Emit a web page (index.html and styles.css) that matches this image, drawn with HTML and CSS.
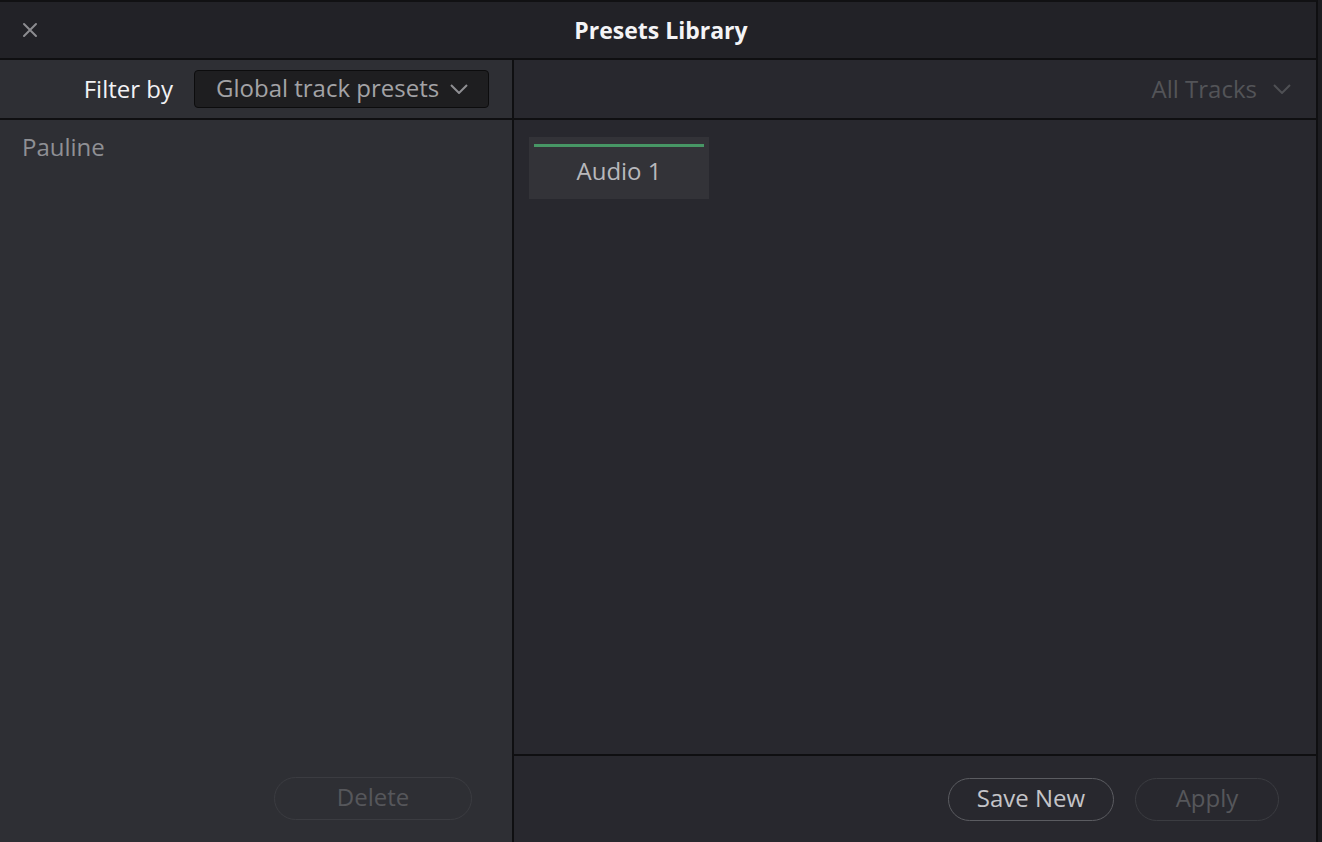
FILE: index.html
```html
<!DOCTYPE html>
<html lang="en">
<head>
    <meta charset="UTF-8">
    <meta name="viewport" content="width=device-width, initial-scale=1.0">
    <title>Presets Library</title>
    <link rel="stylesheet" href="styles.css">
</head>
<body>
    <div class="window">
        <div class="title-bar">
            <button class="close-btn" aria-label="Close">
                <svg width="16" height="16" viewBox="0 0 16 16">
                    <path d="M2 2 L14 14 M14 2 L2 14" stroke="#8c8c90" stroke-width="2" stroke-linecap="round"/>
                </svg>
            </button>
            <h1>Presets Library</h1>
        </div>

        <div class="panes">
            <!-- preset list -->
            <div class="pane pane-left">
                <div class="pane-header">
                    <span class="filter-label">Filter by</span>
                    <div class="dropdown">
                        <span>Global track presets</span>
                        <svg width="18" height="10" viewBox="0 0 18 10">
                            <path d="M1 1 L9 9 L17 1" fill="none" stroke="#8e8e92" stroke-width="2"/>
                        </svg>
                    </div>
                </div>
                <ul class="preset-list">
                    <li>Pauline</li>
                </ul>
                <div class="pane-footer">
                    <button class="pill pill-wide" disabled>Delete</button>
                </div>
            </div>

            <!-- tracks -->
            <div class="pane pane-right">
                <div class="pane-header">
                    <div class="track-filter">
                        <span>All Tracks</span>
                        <svg width="18" height="10" viewBox="0 0 18 10">
                            <path d="M1 1 L9 9 L17 1" fill="none" stroke="#4f5054" stroke-width="2"/>
                        </svg>
                    </div>
                </div>
                <div class="tracks">
                    <div class="track">
                        <div class="track-bar"></div>
                        <span>Audio 1</span>
                    </div>
                </div>
                <div class="pane-footer footer-bordered">
                    <button class="pill pill-active">Save New</button>
                    <button class="pill pill-apply" disabled>Apply</button>
                </div>
            </div>
        </div>
    </div>
    <div class="edge"></div>
</body>
</html>
```

FILE: styles.css
```css
body {
    margin: 0;
    height: 842px;
    overflow: hidden;
    display: flex;
    background-color: #111113;
    font-family: "Open Sans", "Noto Sans", sans-serif;
}

.window {
    width: 1316px;
    height: 840px;
    border-top: 2px solid #111113;
    border-right: 2px solid #0f0f11;
    display: flex;
    flex-direction: column;
}

.edge {
    flex: 1;
    background-color: #1c1c20;
}

.title-bar {
    height: 56px;
    background-color: #222227;
    border-bottom: 2px solid #0f0f11;
    display: flex;
    align-items: center;
    justify-content: center;
    position: relative;
}

.title-bar h1 {
    margin: 0 0 0 6px;
    font-size: 23px;
    font-weight: 700;
    color: #f4f4f6;
}

.close-btn {
    position: absolute;
    left: 22px;
    top: 20px;
    padding: 0;
    background: none;
    border: none;
    width: 16px;
    height: 16px;
    cursor: pointer;
}

.panes {
    flex: 1;
    display: grid;
    grid-template-columns: 512px 1fr;
    column-gap: 2px;
    background-color: #0f0f11;
}

.pane {
    display: flex;
    flex-direction: column;
}

.pane-left {
    background-color: #2e2f34;
}

.pane-right {
    background-color: #28282e;
}

.pane-header {
    height: 60px;
    border-bottom: 2px solid #0f0f11;
    display: flex;
    align-items: center;
    justify-content: flex-end;
    box-sizing: border-box;
    padding-right: 23px;
}

.pane-right .pane-header {
    padding-right: 25px;
}

.filter-label {
    color: #f2f2f4;
    font-size: 24px;
    margin-right: 21px;
    margin-top: -1px;
}

.dropdown {
    width: 295px;
    height: 38px;
    box-sizing: border-box;
    background-color: #1e1e20;
    border: 1px solid #0c0c0d;
    border-radius: 4px;
    display: flex;
    align-items: center;
    padding-left: 21px;
    color: #a3a3a6;
    font-size: 24px;
}

.dropdown span {
    margin-right: 11px;
    margin-top: -3px;
}

.track-filter {
    display: flex;
    align-items: center;
    color: #535458;
    font-size: 24px;
}

.track-filter span {
    margin-right: 16px;
    margin-top: -2px;
}

.preset-list {
    list-style: none;
    margin: 0;
    padding: 10px 22px;
    flex: 1;
}

.preset-list li {
    color: #8f9094;
    font-size: 24px;
}

.tracks {
    flex: 1;
    padding: 17px 15px;
    border-bottom: 2px solid #0f0f11;
}

.track {
    width: 180px;
    height: 62px;
    box-sizing: border-box;
    background-color: #333338;
    padding: 7px 5px 0;
    display: flex;
    flex-direction: column;
    align-items: center;
}

.track-bar {
    width: 100%;
    height: 3px;
    background-color: #479765;
}

.track span {
    margin-top: 7px;
    color: #b8b8bc;
    font-size: 24px;
}

.pane-footer {
    height: 88px;
    display: flex;
    align-items: center;
    justify-content: flex-end;
    gap: 21px;
    padding-right: 40px;
    padding-top: 1px;
}

.footer-bordered {
    height: 86px;
    padding-right: 37px;
    padding-top: 0;
}

.pill {
    height: 43px;
    border-radius: 22px;
    background: transparent;
    font-family: inherit;
    font-size: 24px;
    padding: 0 0 4px;
    border: 1px solid #3b3c41;
    color: #56575b;
}

.pill-wide {
    width: 198px;
}

.pill-active {
    width: 166px;
    border-color: #5b5c61;
    color: #c4c4c8;
    cursor: pointer;
}

.pill-apply {
    width: 144px;
}
```
